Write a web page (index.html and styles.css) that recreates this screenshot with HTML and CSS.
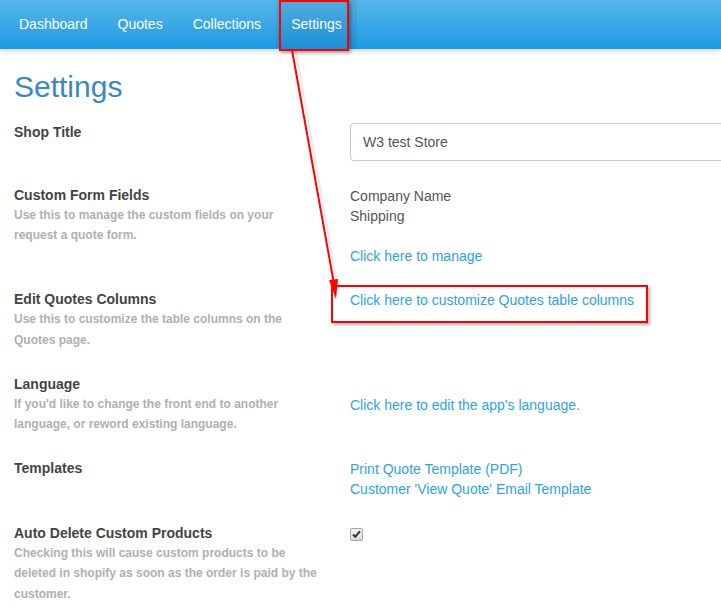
FILE: index.html
```html
<!DOCTYPE html>
<html lang="en">
<head>
  <meta charset="UTF-8" />
  <meta name="viewport" content="width=device-width, initial-scale=1" />
  <title>Settings</title>
  <link rel="stylesheet" href="styles.css">
</head>
<body>
  <nav class="topbar">
    <a href="#" class="nav-item">Dashboard</a>
    <a href="#" class="nav-item">Quotes</a>
    <a href="#" class="nav-item">Collections</a>
    <a href="#" class="nav-item active">Settings</a>
  </nav>

  <main class="page">
    <h1>Settings</h1>

    <div class="setting">
      <div class="label">
        <h3>Shop Title</h3>
      </div>
      <div class="value">
        <input type="text" class="text-input" value="W3 test Store" />
      </div>
    </div>

    <div class="setting">
      <div class="label">
        <h3>Custom Form Fields</h3>
        <p>Use this to manage the custom fields on your request a quote form.</p>
      </div>
      <div class="value">
        <div>Company Name</div>
        <div>Shipping</div>
        <div class="spacer"></div>
        <a href="#">Click here to manage</a>
      </div>
    </div>

    <div class="setting">
      <div class="label">
        <h3>Edit Quotes Columns</h3>
        <p>Use this to customize the table columns on the Quotes page.</p>
      </div>
      <div class="value">
        <a href="#">Click here to customize Quotes table columns</a>
      </div>
    </div>

    <div class="setting">
      <div class="label">
        <h3>Language</h3>
        <p>If you'd like to change the front end to another language, or reword existing language.</p>
      </div>
      <div class="value offset">
        <a href="#">Click here to edit the app's language.</a>
      </div>
    </div>

    <div class="setting">
      <div class="label">
        <h3>Templates</h3>
      </div>
      <div class="value">
        <a href="#">Print Quote Template (PDF)</a>
        <a href="#">Customer 'View Quote' Email Template</a>
      </div>
    </div>

    <div class="setting">
      <div class="label">
        <h3>Auto Delete Custom Products</h3>
        <p>Checking this will cause custom products to be deleted in shopify as soon as the order is paid by the customer.</p>
      </div>
      <div class="value">
        <span class="checkbox">
          <svg width="9" height="8" viewBox="0 0 9 8"><path d="M1 4.5 L3.3 6.8 L8 1.2" fill="none" stroke="#333" stroke-width="2"/></svg>
        </span>
      </div>
    </div>
  </main>

  <!-- annotation overlay -->
  <div class="mark mark-nav"></div>
  <div class="mark mark-link"></div>
  <svg class="arrow" width="721" height="610" viewBox="0 0 721 610">
    <line x1="294" y1="51" x2="336" y2="287" stroke="rgba(0,0,0,0.08)" stroke-width="2" transform="translate(2,1)"/>
    <line x1="292" y1="50" x2="334" y2="284" stroke="#f00" stroke-width="2"/>
    <path d="M329 280 L336 299 L338 279 Z" fill="#f00"/>
  </svg>
</body>
</html>
```

FILE: styles.css
```css
body {
  margin: 0;
  font-family: "Liberation Sans", Arial, sans-serif;
  font-size: 14px;
  color: #555;
  background: #fff;
  overflow: hidden;
  position: relative;
}
a {
  color: #2ea3e3;
  text-decoration: none;
}

.topbar {
  display: flex;
  height: 49px;
  padding-left: 4px;
  background: linear-gradient(#57b6ea, #1d9ae2);
  box-shadow: 0 2px 6px rgba(0, 0, 0, 0.18);
}
.nav-item {
  display: flex;
  align-items: center;
  padding: 0 15px 2px;
  color: #fff;
}
.nav-item.active {
  background: rgba(0, 40, 90, 0.07);
}

.page {
  padding: 0 0 0 14px;
}
h1 {
  margin: 20px 0 17px;
  font-size: 30px;
  font-weight: normal;
  line-height: 36px;
  color: #3a89bd;
}

.setting {
  display: grid;
  grid-template-columns: 336px 1fr;
  align-items: start;
  margin-bottom: 23.5px;
}
.label h3 {
  margin: 0;
  font-size: 14px;
  line-height: 20px;
  color: #444;
}
.label p {
  margin: 0;
  width: 305px;
  font-size: 12px;
  font-weight: bold;
  line-height: 20.5px;
  color: #b0b0b0;
}
.value {
  display: flex;
  flex-direction: column;
  line-height: 20px;
  padding-top: 1px;
}
.value.offset {
  padding-top: 21px;
}
.spacer {
  height: 20px;
}

.text-input {
  width: 371px;
  height: 38px;
  box-sizing: border-box;
  padding: 0 12px;
  border: 1px solid #ccc;
  border-right: none;
  border-radius: 4px 0 0 4px;
  font-family: inherit;
  font-size: 14px;
  color: #555;
}

.checkbox {
  display: flex;
  align-items: center;
  justify-content: center;
  width: 11px;
  height: 11px;
  margin-top: 4px;
  border: 1px solid #a6a6a6;
  border-radius: 2px;
  background: linear-gradient(#f4f4f4, #dcdcdc);
}

.mark {
  position: absolute;
  border: 2px solid #f00;
  box-shadow: 2px 2px 3px rgba(0, 0, 0, 0.3);
}
.mark-nav {
  left: 279px;
  top: 0;
  width: 66px;
  height: 47px;
}
.mark-link {
  left: 331px;
  top: 285px;
  width: 313px;
  height: 34px;
}
.arrow {
  position: absolute;
  left: 0;
  top: 0;
  pointer-events: none;
}
```
